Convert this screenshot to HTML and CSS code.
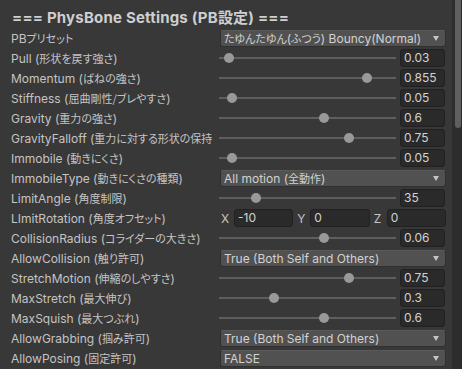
FILE: index.html
```html
<!DOCTYPE html>
<html>
<head>
<meta charset="utf-8">
<link rel="stylesheet" href="styles.css">
</head>
<body>
<div class="window">
  <div class="content">
    <div class="title">=== PhysBone Settings (PB設定) ===</div>
    <div class="rows">
      <div class="row"><div class="label">PB<span class="jp">プリセット</span></div><div class="dropdown"><span><span class="jp">たゆんたゆん</span>(<span class="jp">ふつう</span>) Bouncy(Normal)</span><i class="arrow"></i></div></div>
      <div class="row"><div class="label">Pull (<span class="jp">形状を戻す強さ</span>)</div><div class="slider"><div class="track"><b class="thumb" style="--v:0.03"></b></div><div class="field">0.03</div></div></div>
      <div class="row"><div class="label">Momentum (<span class="jp">ばねの強さ</span>)</div><div class="slider"><div class="track"><b class="thumb" style="--v:0.855"></b></div><div class="field">0.855</div></div></div>
      <div class="row"><div class="label">Stiffness (<span class="jp">屈曲剛性/ブレやすさ</span>)</div><div class="slider"><div class="track"><b class="thumb" style="--v:0.05"></b></div><div class="field">0.05</div></div></div>
      <div class="row"><div class="label">Gravity (<span class="jp">重力の強さ</span>)</div><div class="slider"><div class="track"><b class="thumb" style="--v:0.6"></b></div><div class="field">0.6</div></div></div>
      <div class="row"><div class="label">GravityFalloff (<span class="jp">重力に対する形状の保持</span></div><div class="slider"><div class="track"><b class="thumb" style="--v:0.75"></b></div><div class="field">0.75</div></div></div>
      <div class="row"><div class="label">Immobile (<span class="jp">動きにくさ</span>)</div><div class="slider"><div class="track"><b class="thumb" style="--v:0.05"></b></div><div class="field">0.05</div></div></div>
      <div class="row"><div class="label">ImmobileType (<span class="jp">動きにくさの種類</span>)</div><div class="dropdown"><span>All motion (<span class="jp">全動作</span>)</span><i class="arrow"></i></div></div>
      <div class="row"><div class="label">LimitAngle (<span class="jp">角度制限</span>)</div><div class="slider"><div class="track"><b class="thumb" style="--v:0.1944"></b></div><div class="field">35</div></div></div>
      <div class="row"><div class="label">LImitRotation (<span class="jp">角度オフセット</span>)</div><div class="vector">
        <div class="axis"><span class="axis-l">X</span><div class="field">-10</div></div>
        <div class="axis"><span class="axis-l">Y</span><div class="field">0</div></div>
        <div class="axis"><span class="axis-l">Z</span><div class="field">0</div></div>
      </div></div>
      <div class="row"><div class="label">CollisionRadius (<span class="jp">コライダーの大きさ</span>)</div><div class="slider"><div class="track"><b class="thumb" style="--v:0.6"></b></div><div class="field">0.06</div></div></div>
      <div class="row"><div class="label">AllowCollision (<span class="jp">触り許可</span>)</div><div class="dropdown"><span>True (Both Self and Others)</span><i class="arrow"></i></div></div>
      <div class="row"><div class="label">StretchMotion (<span class="jp">伸縮のしやすさ</span>)</div><div class="slider"><div class="track"><b class="thumb" style="--v:0.75"></b></div><div class="field">0.75</div></div></div>
      <div class="row"><div class="label">MaxStretch (<span class="jp">最大伸び</span>)</div><div class="slider"><div class="track"><b class="thumb" style="--v:0.3"></b></div><div class="field">0.3</div></div></div>
      <div class="row"><div class="label">MaxSquish (<span class="jp">最大つぶれ</span>)</div><div class="slider"><div class="track"><b class="thumb" style="--v:0.6"></b></div><div class="field">0.6</div></div></div>
      <div class="row"><div class="label">AllowGrabbing (<span class="jp">掴み許可</span>)</div><div class="dropdown"><span>True (Both Self and Others)</span><i class="arrow"></i></div></div>
      <div class="row"><div class="label">AllowPosing (<span class="jp">固定許可</span>)</div><div class="dropdown"><span>FALSE</span><i class="arrow"></i></div></div>
    </div>
  </div>
  <div class="scrollbar"><div class="scroll-thumb"></div></div>
</div>
</body>
</html>
```

FILE: styles.css
```css
* { box-sizing: border-box; }
html, body { margin: 0; padding: 0; }
body {
  background: #383838;
  font-family: Inter, "Noto Sans CJK JP", sans-serif;
  font-size: 12px;
  color: #c4c4c4;
  width: 462px;
  height: 369px;
  overflow: hidden;
}
.window { display: flex; height: 369px; }
.content { width: 452px; padding: 0 6px 0 11px; }
.title {
  height: 29px;
  display: flex;
  align-items: center;
  padding-top: 4px;
  padding-left: 1px;
  font-weight: bold;
  font-size: 15px;
  letter-spacing: 0.2px;
  color: #cfcfcf;
  white-space: nowrap;
}
.jp {
  font-family: "Noto Sans CJK JP", sans-serif;
  font-size: 11px;
  font-feature-settings: "palt";
}
.rows { display: flex; flex-direction: column; gap: 2px; }
.row {
  display: grid;
  grid-template-columns: 209px 226px;
  height: 18px;
  align-items: center;
}
.label {
  white-space: nowrap;
  overflow: hidden;
  padding-right: 4px;
  line-height: 18px;
}
.dropdown {
  height: 17px;
  background: #515151;
  border: 1px solid #303030;
  border-top-color: #5a5a5a;
  border-radius: 3px;
  display: flex;
  align-items: center;
  justify-content: space-between;
  padding: 0 6px 0 3px;
  color: #d2d2d2;
  white-space: nowrap;
  line-height: 15px;
}
.arrow {
  width: 0; height: 0;
  border-left: 3.5px solid transparent;
  border-right: 3.5px solid transparent;
  border-top: 5px solid #c4c4c4;
  margin-top: 1px;
}
.slider { display: flex; align-items: center; gap: 4px; height: 18px; }
.track { position: relative; width: 177px; height: 2px; background: #5e5e5e; margin-left: -1px; }
.thumb {
  position: absolute;
  top: -4px;
  left: calc(var(--v) * 167px);
  width: 10px; height: 10px;
  border-radius: 50%;
  background: #999999;
}
.field {
  width: 45px;
  height: 18px;
  background: #2a2a2a;
  border: 1px solid #212121;
  border-radius: 3px;
  padding-left: 3px;
  line-height: 16px;
  color: #d2d2d2;
  white-space: nowrap;
}
.vector { display: flex; gap: 3px; }
.axis { display: flex; align-items: center; flex: 1; }
.axis-l { width: 14px; padding-left: 1px; }
.axis .field { flex: 1; width: auto; }
.scrollbar { width: 10px; background: #2d2d2d; padding: 0 1px 0 3px; }
.scroll-thumb { height: 128px; background: #5f5f5f; border-radius: 0 0 3px 3px; }
```
